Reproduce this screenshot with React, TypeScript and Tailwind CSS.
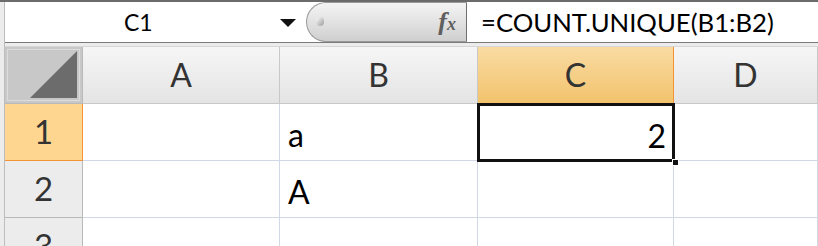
import React from 'react';

const font = { fontFamily: 'Lato, "Open Sans", "Liberation Sans", sans-serif' };

const ColHeader = ({ label, selected }: { label: string; selected?: boolean }) => (
  <div
    className={
      selected
        ? 'flex items-center justify-center h-full border-r border-b border-[#f29436] bg-gradient-to-b from-[#f9dba2] to-[#f2c36c] text-[#333] text-[32px]'
        : 'flex items-center justify-center h-full border-r border-b border-[#c8c8c8] bg-gradient-to-b from-[#f6f6f6] to-[#e4e4e4] text-[#333] text-[32px]'
    }
  >
    {label}
  </div>
);

const RowHeader = ({ label, selected }: { label: string; selected?: boolean }) => (
  <div
    className={
      selected
        ? 'flex items-center justify-center h-full border-r border-b border-[#f29436] bg-[#ffd68f] text-[#333] text-[33px]'
        : 'flex items-center justify-center h-full border-r border-b border-[#b9b9b9] bg-[#ececec] text-[#333] text-[33px]'
    }
  >
    {label}
  </div>
);

const Cell = ({ children }: { children?: React.ReactNode }) => (
  <div className="flex items-center h-full border-r border-b border-[#d0d7e5] px-2 pt-[6px] text-[32px] text-black">
    {children}
  </div>
);

export default function App() {
  return (
    <div className="w-[818px] h-[246px] overflow-hidden bg-[#e9e9e9] border-t-2 border-[#6b6b6b] flex" style={font}>
      {/* left strip */}
      <div className="w-[5px] shrink-0 bg-[#ececec] border-r border-[#bdbdbd]" />
      <div className="flex-1 flex flex-col min-h-0">
        {/* formula bar */}
        <div className="h-[41px] shrink-0 flex bg-white border-b border-[#7a7a7a]">
          <div className="w-[301px] flex items-center relative">
            <span className="ml-[119px] text-[23px] text-black">C1</span>
            <svg className="absolute left-[275px] top-[17px]" width="16" height="8" viewBox="0 0 16 8">
              <path d="M0 0 L16 0 L8 8 Z" fill="#111" />
            </svg>
          </div>
          <div className="w-[161px] h-full flex items-center justify-end rounded-l-[20px] border border-[#9a9a9a] border-r-[#6f6f6f] bg-gradient-to-b from-[#f4f4f4] via-[#e2e2e2] to-[#cfcfcf] relative">
            <div className="absolute left-[9px] top-[14px] w-[8px] h-[9px] rounded-full bg-gradient-to-br from-[#ffffff] to-[#9c9c9c]" />
            <span
              className="mr-[10px] text-[26px] italic font-bold text-[#5f5f5f] leading-none"
              style={{ fontFamily: '"Liberation Serif", "DejaVu Serif", serif' }}
            >
              f<span className="text-[18px]">x</span>
            </span>
          </div>
          <div className="flex-1 flex items-center pl-[14px] text-[25.7px] text-black">
            =COUNT.UNIQUE(B1:B2)
          </div>
        </div>
        <div className="h-[4px] shrink-0 bg-[#ececec] border-b border-[#d6d6d6]" />
        {/* grid */}
        <div className="grid grid-cols-[78px_197px_198px_196px_1fr] grid-rows-[57px_57px_57px_57px] bg-white">
          <div className="h-full border-r border-b border-[#b9b9b9] bg-[#c8c8c8] p-[2px]">
            <div className="w-full h-full border border-[#dcdcdc] flex items-end justify-end p-[2px]">
              <svg width="47" height="47" viewBox="0 0 47 47">
                <path d="M47 0 L47 47 L0 47 Z" fill="#6c6c6c" />
              </svg>
            </div>
          </div>
          <ColHeader label="A" />
          <ColHeader label="B" />
          <ColHeader label="C" selected />
          <ColHeader label="D" />

          <RowHeader label="1" selected />
          <Cell />
          <Cell>a</Cell>
          <div className="relative h-full">
            <div className="absolute inset-[-1px_-1px_-1px_-1px] border-[3px] border-[#111] flex items-center justify-end pr-[6px] pt-[6px] text-[32px] text-black">
              2
            </div>
            <div className="absolute right-[-5px] bottom-[-5px] w-[7px] h-[7px] bg-[#111] border border-white" />
          </div>
          <Cell />

          <RowHeader label="2" />
          <Cell />
          <Cell>A</Cell>
          <Cell />
          <Cell />

          <RowHeader label="3" />
          <Cell />
          <Cell />
          <Cell />
          <Cell />
        </div>
      </div>
    </div>
  );
}
